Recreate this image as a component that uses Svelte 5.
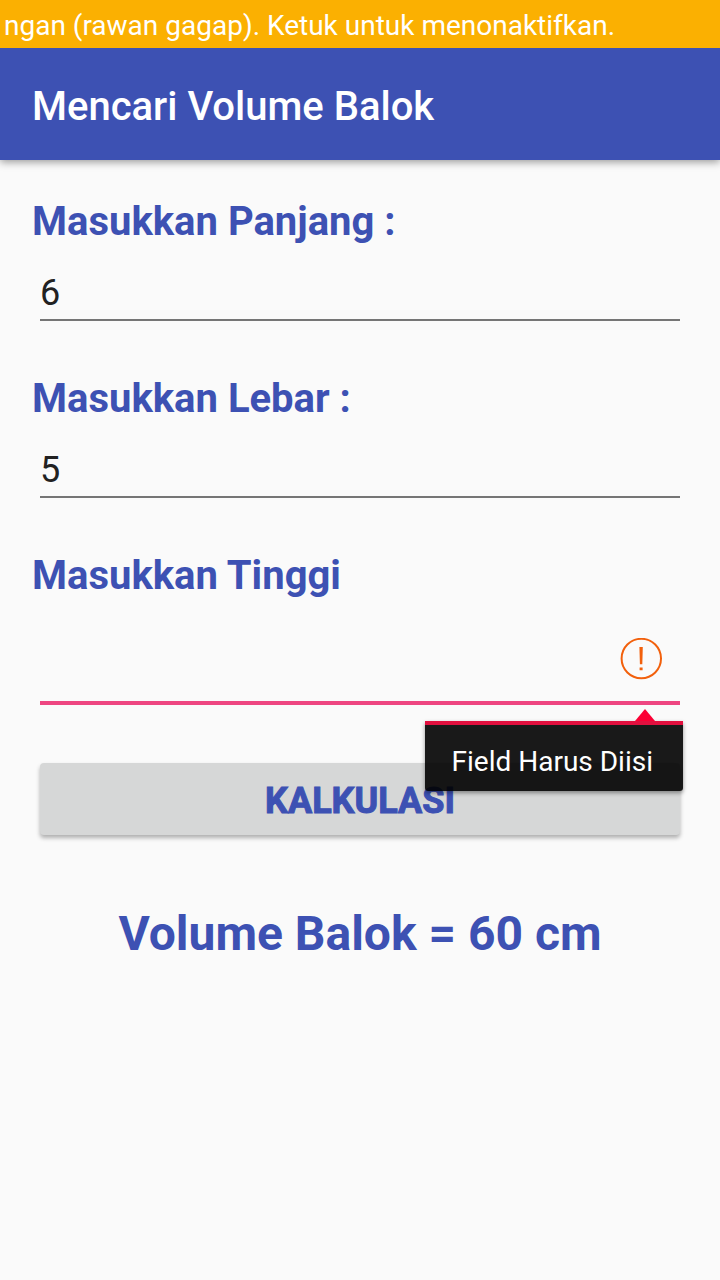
<script>
  let length = $state('6');
  let width = $state('5');
  let height = $state('');
  let result = $state('60');
  let missing = $state(true);

  function calculate() {
    missing = height.trim() === '';
    if (!missing) result = String(Number(length) * Number(width) * Number(height));
  }
</script>

<div class="screen">
  <button class="notice" type="button">ngan (rawan gagap). Ketuk untuk menonaktifkan.</button>
  <header><h1>Mencari Volume Balok</h1></header>
  <main>
    <div class="field">
      <label for="length">Masukkan Panjang :</label>
      <input id="length" inputmode="decimal" bind:value={length} />
    </div>
    <div class="field">
      <label for="width">Masukkan Lebar :</label>
      <input id="width" inputmode="decimal" bind:value={width} />
    </div>
    <div class="field">
      <label for="height">Masukkan Tinggi</label>
      <div class="entry">
        <input id="height" class="active" inputmode="decimal" bind:value={height} aria-invalid={missing} aria-describedby="height-error" />
        {#if missing}
          <svg class="alert" viewBox="0 0 42 42" aria-hidden="true">
            <circle cx="21.3" cy="20.5" r="19.7" fill="none" stroke="#f2600c" stroke-width="2" />
            <path d="M19.4 9h3.4l-.5 17.3h-2.4zM19.6 29.4h3v2.8h-3z" fill="#f2600c" />
          </svg>
          <div class="popup" id="height-error" role="alert">Field Harus Diisi</div>
        {/if}
      </div>
    </div>
    <button class="calculate" type="button" onclick={calculate}>KALKULASI</button>
    <output for="length width height">Volume Balok = {result} cm</output>
  </main>
</div>

<style>
  :global(body) {
    background: #fafafa;
  }
  .screen {
    min-height: 100vh;
    background: #fafafa;
    color: #3d51b3;
    font-family: Roboto, sans-serif;
  }
  button, input {
    font-family: inherit;
    border: 0;
    box-sizing: border-box;
  }
  .notice {
    position: relative;
    display: block;
    width: 100%;
    height: 48px;
    padding: 3px 4px 0;
    background: #fbb001;
    color: #fff;
    font-size: 28px;
    line-height: 44px;
    text-align: left;
    white-space: nowrap;
    overflow: hidden;
  }
  header {
    display: flex;
    align-items: center;
    height: 112px;
    padding: 0 32px;
    box-sizing: border-box;
    background: #3d51b3;
    box-shadow: 0 2px 8px rgba(0, 0, 0, 0.4);
  }
  h1 {
    margin: 0;
    padding-top: 4px;
    color: #fff;
    font-size: 40px;
    font-weight: 500;
  }
  main {
    display: flex;
    flex-direction: column;
    padding: 32px;
  }
  .field {
    display: flex;
    flex-direction: column;
    margin-bottom: 48px;
  }
  label {
    font-size: 40px;
    font-weight: 700;
    line-height: 60px;
  }
  input {
    width: calc(100% - 16px);
    height: 69px;
    margin: 0 8px;
    padding: 14px 0 0;
    background: transparent;
    border-bottom: 2px solid #757575;
    border-radius: 0;
    outline: 0;
    color: #212121;
    font-size: 36px;
  }
  .entry {
    position: relative;
  }
  input.active {
    display: block;
    height: 99px;
    padding-right: 64px;
    border-bottom: 4px solid #ee4681;
  }
  .alert {
    position: absolute;
    right: 26px;
    top: 32px;
    width: 42px;
    height: 42px;
  }
  .popup {
    position: absolute;
    z-index: 1;
    right: 5px;
    top: 115px;
    padding: 20px 30px 13px 27px;
    border-top: 4px solid #e2103f;
    border-radius: 0 0 3px 3px;
    background: rgba(0, 0, 0, 0.9);
    box-shadow: 0 2px 4px rgba(0, 0, 0, 0.4);
    color: #fff;
    font-size: 28px;
    line-height: 33px;
    white-space: nowrap;
  }
  .popup::before {
    content: '';
    position: absolute;
    right: 28px;
    bottom: calc(100% + 4px);
    border: solid transparent;
    border-width: 0 10px 12px;
    border-bottom-color: #fb0034;
  }
  .calculate {
    height: 72px;
    margin: 10px 8px 0;
    padding: 4px 0 0;
    border-radius: 4px;
    background: #d6d7d7;
    box-shadow: 0 3px 4px rgba(0, 0, 0, 0.3);
    color: #3d51b3;
    font-size: 36px;
    font-weight: 700;
    -webkit-text-stroke: 1px #3d51b3;
  }
  output {
    display: block;
    margin-top: 69px;
    font-size: 48px;
    font-weight: 700;
    line-height: 60px;
    text-align: center;
  }
</style>
